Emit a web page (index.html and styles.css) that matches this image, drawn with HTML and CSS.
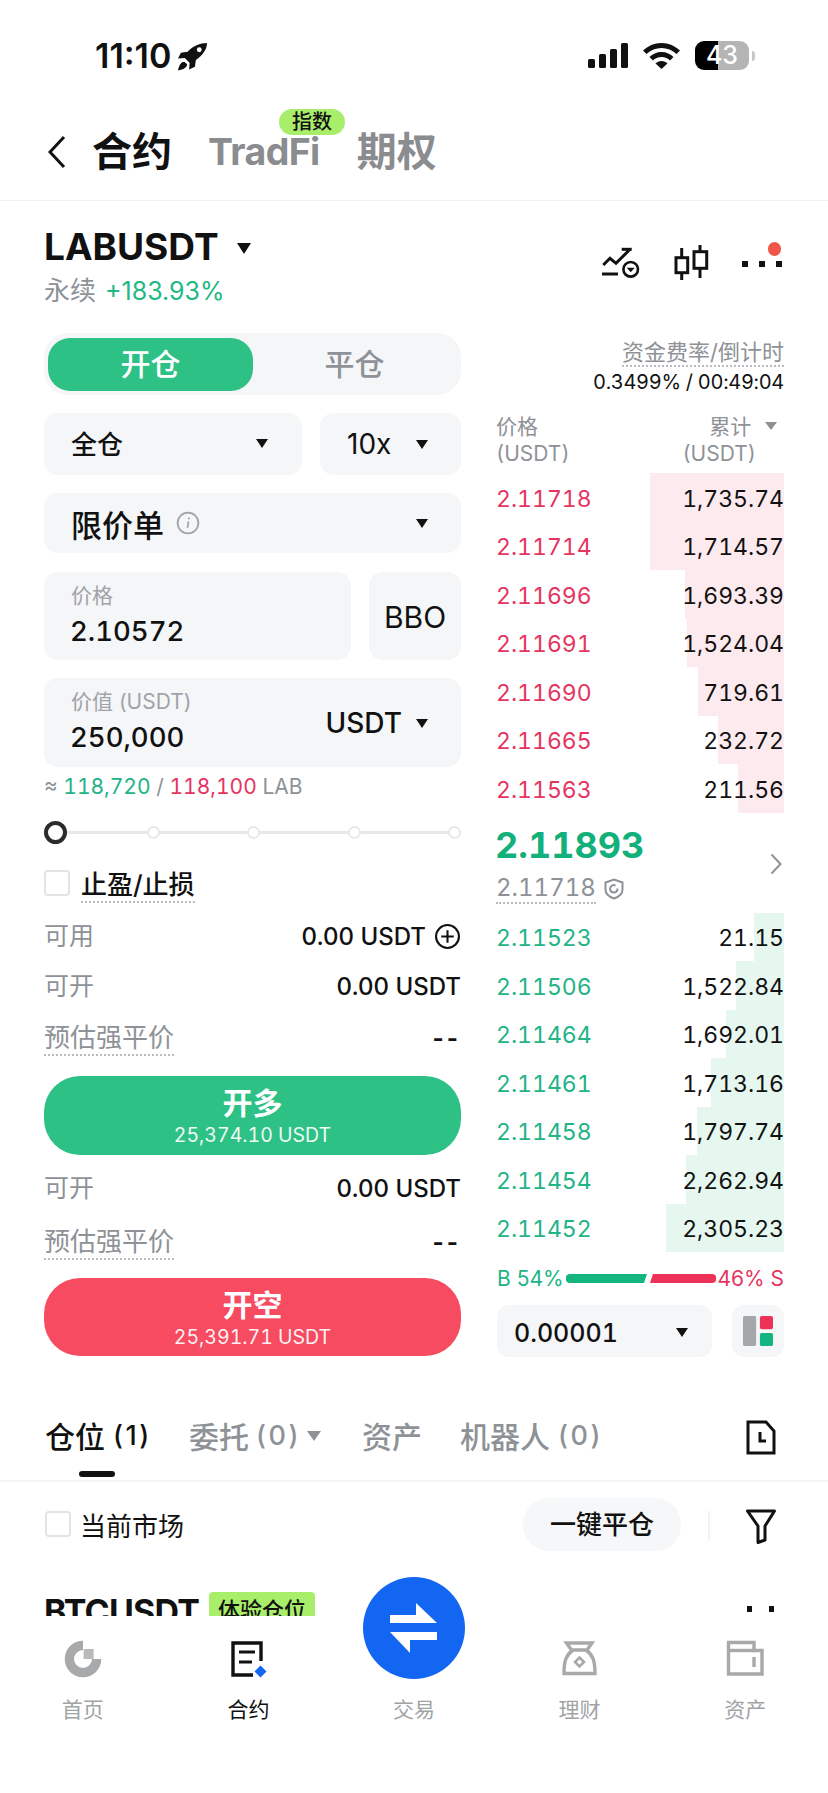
FILE: index.html
```html
<!DOCTYPE html>
<html lang="zh-CN">
<head>
<meta charset="utf-8">
<title>合约</title>
<link rel="stylesheet" href="styles.css">
</head>
<body>
<div class="phone">
  <div class="status">
    <div class="time">11:10
      <svg class="rocket" viewBox="0 0 32 30"><path d="M31 1C24 1 16 4 11 10L4 11 1 17l7-.5 5 5-.5 7 6-3 1-7C26 14 31 8 31 1Z"/><circle cx="23" cy="8" r="2.500" fill="#fff"/><path d="M7.500 20.500c-3 0-5.500 3-6.500 9 6-1 9.500-3.500 9.500-6.500Z"/></svg>
    </div>
    <div class="status-right">
      <svg class="signal" viewBox="0 0 40 25"><rect x="0" y="16" width="7" height="9" rx="1.5"/><rect x="11" y="11" width="7" height="14" rx="1.5"/><rect x="22" y="6" width="7" height="19" rx="1.5"/><rect x="33" y="0" width="7" height="25" rx="1.5"/></svg>
      <svg class="wifi" viewBox="0 0 37 26"><path d="M18.5 0C11 0 5 3 0 7.500l3.500 3.500C7.500 7 13 5 18.500 5s11 2 15 6L37 7.500C32 3 26 0 18.500 0Z"/><path d="M18.500 9c-5 0-9 2-12 5l3.500 3.500c2-2 5-3.500 8.500-3.500s6.500 1.500 8.500 3.500L30.500 14c-3-3-7-5-12-5Z"/><path d="M18.500 18c-2.500 0-4.500 1-6 2.500l6 5.500 6-5.500c-1.500-1.500-3.500-2.500-6-2.500Z"/></svg>
      <div class="battery">43</div>
      <span class="nub"></span>
    </div>
  </div>

  <div class="topnav">
    <svg class="back" viewBox="0 0 18 34"><path d="M16 2 2 17l14 15" fill="none" stroke="#111" stroke-width="3"/></svg>
    <span class="nav-main">合约</span>
    <span class="nav-sub tradfi">TradFi<span class="badge">指数</span></span>
    <span class="nav-sub qq">期权</span>
  </div>

  <div class="symbol">
    <div>
      <div class="sym-name">LABUSDT <span class="caret caret-lg"></span></div>
      <div class="sym-sub">永续<span class="pct">+183.93%</span></div>
    </div>
    <div class="sym-icons">
      <svg class="ic-chart" viewBox="0 0 40 36" fill="none" stroke="#111" stroke-width="3"><path d="M2 29H18"/><path d="M3.300 20 10 13.300 16 18.300 29.300 5"/><path d="M21.700 4.300H31.700"/><circle cx="30.700" cy="24.300" r="7.300" stroke-width="2.600"/><path d="M26.700 22.800H34.700L30.700 27.300Z" fill="#111" stroke="none"/></svg>
      <svg class="ic-candle" viewBox="0 0 38 40" fill="none" stroke="#111" stroke-width="3"><path d="M9.700 5V37"/><rect x="4" y="14.700" width="11.700" height="15" fill="#fff"/><path d="M28 2V35"/><rect x="22" y="8.700" width="12.700" height="16.600" fill="#fff"/></svg>
      <div class="ic-more"><i></i><i></i><i></i><b></b></div>
    </div>
  </div>

  <div class="trade">
    <div class="left">
      <div class="seg"><div class="seg-on">开仓</div><div class="seg-off">平仓</div></div>
      <div class="line-two">
        <div class="field sel wide"><span>全仓</span><span class="caret"></span></div>
        <div class="field sel lev"><span>10x</span><span class="caret"></span></div>
      </div>
      <div class="field sel order"><span class="order-name">限价单 <svg class="info" viewBox="0 0 22 22" fill="none" stroke="#a0a3a8" stroke-width="1.600"><circle cx="11" cy="11" r="9.500"/><path d="M11.500 9.500l-1 6M11.800 6v1.500"/></svg></span><span class="caret"></span></div>
      <div class="line-price">
        <div class="field input grow"><div class="lbl">价格</div><div class="val">2.10572</div></div>
        <div class="field bbo">BBO</div>
      </div>
      <div class="field input value">
        <div><div class="lbl">价值 (USDT)</div><div class="val">250,000</div></div>
        <div class="unit">USDT <span class="caret"></span></div>
      </div>
      <div class="approx"><span class="muted">≈</span> <span class="up">118,720</span> <span class="muted">/</span> <span class="down">118,100</span> <span class="muted">LAB</span></div>
      <div class="slider"><i class="knob"></i><i class="tick"></i><i class="tick"></i><i class="tick"></i><i class="tick"></i></div>
      <div class="tp"><span class="check"></span><span class="dotted">止盈/止损</span></div>
      <div class="kv"><span class="k">可用</span><span class="v">0.00 USDT <svg class="plus" viewBox="0 0 24 24" fill="none" stroke="#111" stroke-width="2"><circle cx="12" cy="12" r="11"/><path d="M12 6v12M6 12h12"/></svg></span></div>
      <div class="kv"><span class="k">可开</span><span class="v">0.00 USDT</span></div>
      <div class="kv kv-mid"><span class="k lg dotted">预估强平价</span><span class="v dash">--</span></div>
      <div class="btn btn-long"><div class="btn-t">开多</div><div class="btn-s">25,374.10 USDT</div></div>
      <div class="kv kv-first"><span class="k">可开</span><span class="v">0.00 USDT</span></div>
      <div class="kv kv-low"><span class="k lg dotted">预估强平价</span><span class="v dash">--</span></div>
      <div class="btn btn-short"><div class="btn-t">开空</div><div class="btn-s">25,391.71 USDT</div></div>
    </div>

    <div class="right">
      <div class="funding"><div class="f-l"><span class="dotted">资金费率/倒计时</span></div><div class="f-v">0.3499% / 00:49:04</div></div>
      <div class="book-head">
        <div><div>价格</div><div>(USDT)</div></div>
        <div class="ta-r"><div class="sum-l">累计 <span class="caret caret-grey"></span></div><div class="usdt-r">(USDT)</div></div>
      </div>
      <div class="book asks">
        <div class="row"><i class="bar" style="width:134px"></i><span class="p">2.11718</span><span class="q">1,735.74</span></div>
        <div class="row"><i class="bar" style="width:134px"></i><span class="p">2.11714</span><span class="q">1,714.57</span></div>
        <div class="row"><i class="bar" style="width:99px"></i><span class="p">2.11696</span><span class="q">1,693.39</span></div>
        <div class="row"><i class="bar" style="width:97px"></i><span class="p">2.11691</span><span class="q">1,524.04</span></div>
        <div class="row"><i class="bar" style="width:86px"></i><span class="p">2.11690</span><span class="q">719.61</span></div>
        <div class="row"><i class="bar" style="width:66px"></i><span class="p">2.11665</span><span class="q">232.72</span></div>
        <div class="row"><i class="bar" style="width:46px"></i><span class="p">2.11563</span><span class="q">211.56</span></div>
      </div>
      <div class="mid">
        <div>
          <div class="last">2.11893</div>
          <div class="mark"><span class="dotted">2.11718</span>
            <svg class="shield" viewBox="0 0 20 22" fill="none" stroke="#8e9297" stroke-width="2"><path d="M10 1.500 18.500 4.500v7c0 4.500-4 7.500-8.500 9-4.500-1.500-8.500-4.500-8.500-9v-7Z"/><path d="M13.500 10.500a3.700 3.700 0 1 1-2-3"/></svg>
          </div>
        </div>
        <svg class="chev" viewBox="0 0 12 22"><path d="M1.500 1.500 10.500 11l-9 9.500" fill="none" stroke="#8e9297" stroke-width="2"/></svg>
      </div>
      <div class="book bids">
        <div class="row"><i class="bar" style="width:30px"></i><span class="p">2.11523</span><span class="q">21.15</span></div>
        <div class="row"><i class="bar" style="width:48px"></i><span class="p">2.11506</span><span class="q">1,522.84</span></div>
        <div class="row"><i class="bar" style="width:58px"></i><span class="p">2.11464</span><span class="q">1,692.01</span></div>
        <div class="row"><i class="bar" style="width:73px"></i><span class="p">2.11461</span><span class="q">1,713.16</span></div>
        <div class="row"><i class="bar" style="width:87px"></i><span class="p">2.11458</span><span class="q">1,797.74</span></div>
        <div class="row"><i class="bar" style="width:98px"></i><span class="p">2.11454</span><span class="q">2,262.94</span></div>
        <div class="row"><i class="bar" style="width:118px"></i><span class="p">2.11452</span><span class="q">2,305.23</span></div>
      </div>
      <div class="ratio">
        <span class="up">B 54%</span>
        <svg class="ratio-bar" viewBox="0 0 150 9"><path d="M4 0H81L78 9H4a4.500 4.500 0 0 1 0-9Z" fill="#14b57e"/><path d="M87 0H146a4.500 4.500 0 0 1 0 9H84Z" fill="#ee3158"/></svg>
        <span class="down">46% S</span>
      </div>
      <div class="book-foot">
        <div class="field sel tick-sel"><span>0.00001</span><span class="caret"></span></div>
        <div class="field layout"><svg viewBox="0 0 32 32"><rect x="0" y="0" width="14" height="32" rx="1.500" fill="#a5a7aa"/><rect x="18" y="0" width="14" height="14" rx="2" fill="#ee3158"/><rect x="18" y="18" width="14" height="14" rx="2" fill="#14b57e"/></svg></div>
      </div>
    </div>
  </div>

  <div class="tabs">
    <div class="tab tab1 on">仓位<span class="cnt">(1)</span></div>
    <div class="tab tab2">委托<span class="cnt">(0)</span><span class="caret caret-grey"></span></div>
    <div class="tab tab3">资产</div>
    <div class="tab">机器人<span class="cnt">(0)</span></div>
    <svg class="hist" viewBox="0 0 30 35" fill="none" stroke="#111" stroke-width="3"><path d="M2 2H20L28 11V33H2Z"/><path d="M14 12v9h6"/></svg>
  </div>

  <div class="filters">
    <div class="market"><span class="check"></span>当前市场</div>
    <div class="filter-r">
      <div class="closeall">一键平仓</div>
      <span class="vline"></span>
      <svg class="funnel" viewBox="0 0 30 35" fill="none" stroke="#111" stroke-width="3" stroke-linejoin="round"><path d="M1.500 2H28.500L19 17V31L12 33.500V17Z"/></svg>
    </div>
  </div>

  <div class="pos">
    <span class="pos-name">BTCUSDT</span><span class="pos-tag">体验仓位</span>
    <div class="pos-dots"><i></i><i></i></div>
  </div>

  <nav class="bottom">
    <div class="fab"><svg viewBox="0 0 48 50" fill="#fff"><path d="M26 0 47 20H0V12H26Z"/><path d="M0 29H47V37H20V50Z"/></svg></div>
    <div class="item"><svg class="n-ic" viewBox="0 0 38 38"><path d="M19 .7A18.300 18.300 0 1 0 37.300 19H28A9 9 0 1 1 19 10Z" fill="#a8a9ab"/><rect x="19.600" y="9" width="10" height="10" fill="#b9babc"/></svg><span>首页</span></div>
    <div class="item act"><svg class="n-ic n-vis" viewBox="0 0 38 38" fill="none" stroke="#111" stroke-width="3.400"><path d="M32 21V3H4V35H24"/><path d="M10 12H26M10 22H23" stroke-width="3"/><path d="M31.500 25.500l6 6-6 6-6-6z" fill="#1266f1" stroke="none"/></svg><span>合约</span></div>
    <div class="item mid-item"><span class="n-spacer"></span><span>交易</span></div>
    <div class="item"><svg class="n-ic" viewBox="0 0 38 38" fill="none" stroke="#a8a9ab" stroke-width="3.400"><path d="M5.500 3H31L26 10H10.500Z"/><path d="M12 10C5 15 3 21 3 33.500H34C34 21 32 15 25 10"/><path d="M18.500 17.500l4.500 4.500-4.500 4.500-4.500-4.500z" stroke-width="2.600"/></svg><span>理财</span></div>
    <div class="item"><svg class="n-ic" viewBox="0 0 38 38" fill="none" stroke="#a8a9ab" stroke-width="3.400"><path d="M2.500 2.500H28V10.500H36V34H2.500Z"/><path d="M2.500 10.500H28"/><path d="M28 17V27"/></svg><span>资产</span></div>
  </nav>
</div>
</body>
</html>
```

FILE: styles.css
```css
* { box-sizing: border-box; }
html, body { margin: 0; padding: 0; background: #fff; }
body {
  font-family: Inter, "Noto Sans CJK SC", sans-serif;
  font-feature-settings: "tnum" 1;
  color: #111;
}
.phone { width: 828px; height: 1793px; position: relative; overflow: hidden; background: #fff; }
i { display: block; }

/* status bar */
.status { height: 100px; padding: 41px 73px 0 95px; display: flex; justify-content: space-between; align-items: flex-start; }
.time { display: flex; align-items: center; font-size: 34px; line-height: 30px; font-weight: 600; letter-spacing: 0; font-feature-settings: "tnum" 0; }
.rocket { width: 31px; height: 29px; margin-left: 6px; fill: #111; }
.status-right { display: flex; align-items: center; height: 29px; }
.signal { width: 40px; height: 25px; fill: #111; margin-right: 15px; }
.wifi { width: 37px; height: 26px; fill: #111; margin-right: 15px; }
.battery { width: 54px; height: 29px; border-radius: 9px; background: linear-gradient(90deg, #000 43%, #b5b5b5 43%); color: #fff; font-size: 25px; line-height: 29px; font-weight: 500; text-align: center; font-feature-settings: "tnum" 0; }
.nub { width: 3px; height: 10px; margin-left: 3px; border-radius: 0 3px 3px 0; background: #c8c8c8; }

/* top nav */
.topnav { height: 101px; display: flex; align-items: center; border-bottom: 1px solid #f1f2f3; padding: 3px 0 0 48px; }
.back { width: 18px; height: 34px; margin-right: 26px; }
.nav-main { font-size: 40px; line-height: 44px; font-weight: 700; }
.nav-sub { font-size: 40px; line-height: 44px; font-weight: 700; color: #8a8c90; }
.tradfi { position: relative; margin-left: 36px; font-size: 37.500px; line-height: 34px; font-feature-settings: "tnum" 0; letter-spacing: -.6px; }
.qq { margin-left: 37px; }
.badge { position: absolute; left: 71px; top: -26px; width: 66px; height: 26px; border-radius: 13px; background: #a9ee6a; color: #111; font-size: 20px; line-height: 26px; font-weight: 500; text-align: center; letter-spacing: 0; }

/* symbol */
.symbol { height: 132px; padding: 27px 46px 0 44px; display: flex; justify-content: space-between; }
.sym-name { font-size: 37px; line-height: 38px; font-weight: 700; letter-spacing: 0; display: flex; align-items: center; font-feature-settings: "tnum" 0; }
.sym-sub { margin-top: 8px; font-size: 26px; line-height: 33px; color: #8e9297; display: flex; align-items: baseline; gap: 9px; }
.pct { color: #22b884; font-size: 25px; font-feature-settings: "tnum" 0; }
.sym-icons { display: flex; align-items: flex-start; padding-top: 15px; position: relative; }
.ic-chart { width: 40px; height: 36px; margin: 2px 32px 0 0; }
.ic-candle { width: 38px; height: 40px; margin-right: 32px; }
.ic-more { display: flex; gap: 11.500px; padding-top: 18px; position: relative; width: 40px; }
.ic-more i { width: 5.500px; height: 5.500px; background: #111; }
.ic-more b { position: absolute; right: 1px; top: -1px; width: 13.500px; height: 13.500px; border-radius: 50%; background: #f0564a; }

.caret { display: inline-block; width: 0; height: 0; border-left: 6.500px solid transparent; border-right: 6.500px solid transparent; border-top: 9px solid #111; }
.caret-lg { margin-left: 18px; margin-top: 2px; border-left-width: 7.500px; border-right-width: 7.500px; border-top-width: 11px; }
.caret-grey { border-top-color: #8e9297; border-left-width: 6px; border-right-width: 6px; border-top-width: 8px; vertical-align: 4px; margin-left: 8px; }

/* trade */
.trade { display: flex; padding: 0 44px; justify-content: space-between; align-items: flex-start; }
.left { width: 417px; }
.right { width: 287px; }
.field { background: #f5f6f8; border-radius: 14px; }
.seg { height: 62px; border-radius: 24px; background: #f5f6f8; padding: 5px 0 0 4px; display: flex; font-size: 30px; line-height: 53px; text-align: center; }
.seg-on { width: 205px; height: 53px; border-radius: 22px; background: #2dc186; color: #fff; font-weight: 500; }
.seg-off { flex: 1; color: #8e9297; font-weight: 500; padding-right: 5px; }
.sel { display: flex; justify-content: space-between; align-items: center; }
.line-two { display: flex; justify-content: space-between; margin-top: 18px; }
.wide { width: 258px; height: 62px; padding: 0 34px 3px 27px; font-size: 26px; font-weight: 500; }
.lev { width: 141px; height: 62px; padding: 0 33px 1px 27px; font-size: 28px; font-feature-settings: "tnum" 0; }
.lev .caret, .wide .caret { margin-top: 2px; }
.order { height: 60px; margin-top: 18px; padding: 0 33px 0 27px; font-size: 31px; font-weight: 500; }
.order-name { display: flex; align-items: center; gap: 12px; }
.info { width: 24px; height: 24px; }
.line-price { display: flex; justify-content: space-between; margin-top: 19px; }
.input { height: 88px; padding: 9px 27px 0; }
.grow { width: 307px; }
.bbo { width: 92px; height: 88px; font-size: 30px; line-height: 91px; font-weight: 400; text-align: center; font-feature-settings: "tnum" 0; }
.lbl { font-size: 21px; line-height: 30px; color: #a0a3a8; font-feature-settings: "tnum" 0; }
.val { font-size: 27.500px; line-height: 40px; font-weight: 500; margin-left: -1px; }
.value { height: 89px; margin-top: 18px; display: flex; justify-content: space-between; align-items: flex-start; padding-right: 33px; }
.unit { font-size: 28px; line-height: 72px; font-weight: 500; display: flex; align-items: center; gap: 14px; font-feature-settings: "tnum" 0; }
.approx { height: 40px; font-size: 21px; line-height: 40px; }
.muted { color: #8e9297; }
.up { color: #22b386; }
.down { color: #e5355f; }
.slider { height: 50px; display: flex; align-items: center; background: linear-gradient(#e7e8ea, #e7e8ea) center / 100% 3px no-repeat; }
.knob { width: 23px; height: 23px; border: 4px solid #2b2b2b; border-radius: 50%; background: #fff; margin-right: -8px; }
.tick { width: 13px; height: 13px; border: 2px solid #e7e8ea; border-radius: 50%; background: #fff; margin-left: 87.500px; }
.tp { height: 52px; display: flex; align-items: center; gap: 11px; font-size: 26px; font-weight: 500; margin-bottom: 2px; }
.check { display: inline-block; width: 26px; height: 26px; border: 2px solid #e3e4e6; border-radius: 4px; background: #fff; flex: none; }
.dotted { border-bottom: 2px dotted #b9bbbf; }
.kv { height: 50px; display: flex; justify-content: space-between; align-items: center; }
.tp + .kv { margin-top: 1px; }
.kv-mid { padding-top: 5px; }
.kv-first { margin-top: 8px; }
.kv-low { padding-top: 8px; }
.k { font-size: 25px; line-height: 34px; color: #8e9297; }
.k.lg { font-size: 26px; line-height: 33px; }
.v { display: flex; align-items: center; font-size: 24px; font-weight: 500; font-feature-settings: "tnum" 0; }
.dash { letter-spacing: 3px; font-weight: 700; padding-right: 0; }
.plus { width: 25px; height: 25px; margin: 0 1px 0 9px; }
.btn { height: 79px; border-radius: 36px; margin-top: 15px; color: #fff; text-align: center; padding-top: 7px; }
.btn-long { background: #2dc186; }
.btn-short { background: #f64b61; margin-top: 15px; height: 78px; }
.btn-t { font-size: 30px; line-height: 40px; font-weight: 700; }
.btn-s { font-size: 19.500px; line-height: 24px; opacity: .92; }

/* right */
.funding { padding-top: 4px; text-align: right; }
.f-l { font-size: 22px; line-height: 30px; color: #8e9297; }
.f-v { font-size: 20px; line-height: 30px; letter-spacing: -.3px; }
.book-head { margin-top: 16px; margin-left: -1px; display: flex; justify-content: space-between; font-size: 21px; line-height: 27px; color: #8e9297; }
.ta-r { text-align: right; }
.sum-l { padding-right: 7px; }
.usdt-r { padding-right: 28px; }
.book { margin-top: 6px; }
.row { position: relative; display: flex; justify-content: space-between; align-items: center; height: 48.500px; font-size: 23px; padding-top: 3px; }
.row span { position: relative; }
.row .p { margin-left: -1px; }
.bar { position: absolute; right: 0; top: 0; bottom: 0; }
.asks .bar { background: #fdeaee; }
.bids .bar { background: #e6f7f0; }
.asks .p { color: #e5355f; }
.bids .p { color: #22b386; }
.bids { margin-top: 0; }
.bids .row { height: 48.500px; }
.mid { height: 100px; display: flex; justify-content: space-between; align-items: center; padding-right: 1px; }
.last { font-size: 36px; line-height: 46px; margin-left: -2px; font-weight: 700; color: #12b07a; }
.mark { margin-top: 6px; margin-left: -1px; display: flex; align-items: center; gap: 8px; font-size: 24px; line-height: 28px; color: #8e9297; }
.shield { width: 20px; height: 22px; }
.chev { width: 12px; height: 22px; margin-right: 1px; margin-top: 2px; }
.ratio { height: 49.400px; padding-top: 3px; display: flex; align-items: center; justify-content: space-between; font-size: 21px; font-feature-settings: "tnum" 0; }
.ratio-bar { width: 150px; height: 9px; }
.book-foot { margin-top: 4px; display: flex; justify-content: space-between; }
.tick-sel { width: 215px; height: 52px; padding: 3px 24px 0 17px; font-size: 25px; font-weight: 500; border-radius: 12px; }
.layout { width: 52px; height: 52px; padding: 11px 10px; border-radius: 12px; }
.layout svg { display: block; width: 32px; height: 30px; }

/* tabs */
.tabs { margin-top: 37px; height: 88px; padding: 0 44px 4px 45px; display: flex; align-items: center; border-bottom: 2px solid #f3f4f5; position: relative; font-size: 30px; color: #8e9297; }
.tab { white-space: nowrap; font-weight: 500; display: flex; align-items: center; }
.tab1 { width: 144px; }
.tab2 { width: 173px; }
.tab3 { width: 98px; }
.tab.on { color: #111; position: relative; }
.tab.on::after { content: ""; position: absolute; left: 34px; bottom: -20px; width: 36px; height: 6px; border-radius: 3px; background: #111; }
.cnt { font-size: 27px; letter-spacing: 2.500px; margin-left: 8px; font-feature-settings: "tnum" 0; }
.tab2 .cnt { margin-left: 7px; }
.tab2 .caret-grey { margin: 2px 0 0 6px; vertical-align: 0; border-left-width: 7px; border-right-width: 7px; border-top-width: 10px; }
.hist { position: absolute; right: 52px; top: 26px; width: 30px; height: 35px; }

.filters { height: 88px; display: flex; justify-content: space-between; align-items: center; padding: 0 52px 4px 45px; }
.market { display: flex; align-items: center; gap: 9px; font-size: 26px; }
.filter-r { display: flex; align-items: center; padding-top: 4px; }
.closeall { width: 158px; height: 53px; margin: -3px -2px 0 2px; border-radius: 26px; background: #f6f7f8; font-size: 26px; line-height: 53px; text-align: center; font-weight: 500; }
.vline { width: 2px; height: 30px; margin: 0 36px 0 29px; background: #f1f2f3; }
.funnel { width: 30px; height: 35px; }

.pos { padding: 22px 44px 0 44px; display: flex; align-items: flex-start; position: relative; }
.pos-name { font-size: 34px; line-height: 40px; font-weight: 700; letter-spacing: -.8px; font-feature-settings: "tnum" 0; }
.pos-tag { margin-left: 10px; width: 106px; height: 36px; border-radius: 4px; background: #a9ee6a; font-size: 22px; line-height: 36px; font-weight: 500; text-align: center; }
.pos-dots { position: absolute; right: 54px; top: 36px; display: flex; gap: 17px; }
.pos-dots i { width: 5px; height: 6px; background: #111; }

/* bottom nav */
.bottom { position: absolute; left: 0; right: 0; bottom: 0; height: 177px; background: #fff; display: grid; grid-template-columns: repeat(5, 1fr); padding-top: 24px; }
.item { display: flex; flex-direction: column; align-items: center; font-size: 21px; color: #a0a3a6; }
.item span { display: block; }
.item.act { color: #111; }
.n-ic { width: 38px; height: 38px; margin-bottom: 15px; overflow: visible; }
.n-spacer { height: 53px; }
.fab { position: absolute; left: 363px; top: -39px; width: 102px; height: 102px; border-radius: 50%; background: #1266f1; padding: 26px 27px; }
.fab svg { display: block; width: 48px; height: 50px; }
```
